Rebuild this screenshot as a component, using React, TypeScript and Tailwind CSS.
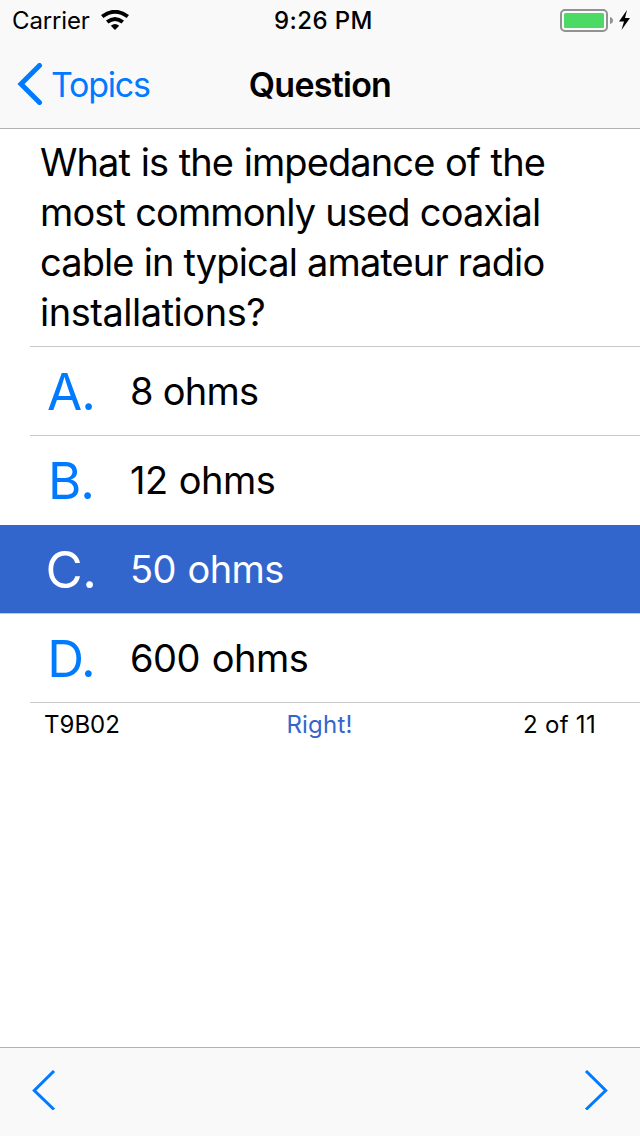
import React from 'react';

const lines = [
  { text: 'What is the impedance of the', style: 'tracking-[-0.9px] [word-spacing:0.8px]' },
  { text: 'most commonly used coaxial', style: 'tracking-[-0.88px] [word-spacing:0.3px]' },
  { text: 'cable in typical amateur radio', style: 'tracking-[-0.88px] [word-spacing:0.2px]' },
  { text: 'installations?', style: 'tracking-[-0.47px]' },
];

const answers = [
  { letter: 'A.', text: '8 ohms', style: 'tracking-[-0.75px]' },
  { letter: 'B.', text: '12 ohms', style: 'tracking-[-0.5px] [word-spacing:1px]' },
  { letter: 'C.', text: '50 ohms', style: 'tracking-[-0.6px] [word-spacing:1.5px]' },
  { letter: 'D.', text: '600 ohms', style: 'tracking-[-0.5px] [word-spacing:1.5px]' },
];

export default function App() {
  return (
    <div className="flex h-[1136px] w-[640px] flex-col overflow-hidden bg-white font-['Inter',sans-serif] text-black">
      <header className="h-[129px] shrink-0 border-b border-[#b2b2b2] bg-[#f9f9f9]">
        <div className="grid h-10 grid-cols-3 items-center pr-[8px] pl-3 text-[24px]">
          <div className="flex items-center gap-[11px]">
            <span className="pt-px tracking-[-0.15px]">Carrier</span>
            <svg className="h-5 w-7" viewBox="0 0 28 20">
              <path d="M1.200 6.500Q14-3 26.800 6.500M6.200 12Q14 5.800 21.800 12" fill="none" stroke="#000" strokeWidth="3.900" />
              <path d="M14 20l-4.200-4.300q4.200-3.500 8.400 0z" />
            </svg>
          </div>
          <span className="pt-px pl-[3px] text-center font-medium tracking-[0.4px]">9:26 PM</span>
          <div className="flex justify-end">
            <svg className="h-6 w-[72px]" viewBox="0 0 72 24">
              <rect x="1" y="2" width="46" height="21" rx="4" fill="none" stroke="#929292" strokeWidth="2" />
              <rect x="4" y="5" width="40" height="15" rx="1.500" fill="#4cd964" />
              <path d="M50 9q3 1 3 3.500T50 16z" fill="#929292" />
              <path d="M67 2l-8 11.500h5L61.500 22 70 10h-5z" />
            </svg>
          </div>
        </div>
        <div className="grid h-[88px] grid-cols-3 items-center text-[34px]">
          <button className="flex items-center gap-2 pl-[17px] text-[#007aff]">
            <svg className="h-[42px] w-[26px]" viewBox="0 0 26 42"><path d="M22.500 2.500L4 21l18.500 18.500" fill="none" stroke="currentColor" strokeWidth="5" strokeLinecap="round" /></svg>
            <span className="tracking-[-1.25px]">Topics</span>
          </button>
          <h1 className="text-center font-semibold tracking-[-0.75px]">Question</h1>
        </div>
      </header>
      <main className="flex-1">
        <p className="h-[217px] pt-2 pl-10 text-[38px] leading-[50px]">
          {lines.map((line) => (
            <span key={line.text} className={`block whitespace-nowrap ${line.style}`}>{line.text}</span>
          ))}
        </p>
        {answers.map((a, i) => (
          <div key={a.letter} className={i === 2 ? 'flex h-[89px] border-t border-white bg-[#3366cc] pl-[30px] text-white' : i === 3 ? 'flex h-[89px] border-t border-[#c8c7cc] pl-[30px]' : 'flex h-[89px] pl-[30px]'}>
            <div className={i >= 2 ? 'flex w-full items-center' : 'flex w-full items-center border-t border-[#c8c7cc]'}>
              <span className={i === 2 ? 'w-20 pt-0.5 pl-0.5 text-center text-[51px] tracking-[-0.5px]' : 'w-20 pt-0.5 pl-0.5 text-center text-[51px] tracking-[-1px] text-[#007aff]'}>{a.letter}</span>
              <span className={`ml-5 text-[38px] ${a.style}`}>{a.text}</span>
            </div>
          </div>
        ))}
        <div className="ml-[30px] grid grid-cols-3 border-t border-[#c8c7cc] pt-1 pr-[45px] pl-[14px] text-[24px]">
          <span>T9B02</span>
          <span className="text-center tracking-[0.2px] text-[#3366cc]">Right!</span>
          <span className="-mr-px text-right tracking-[0.3px]">2 of 11</span>
        </div>
      </main>
      <footer className="flex h-[89px] shrink-0 items-center justify-between border-t border-[#b2b2b2] bg-[#f9f9f9] px-8 pb-1 text-[#007aff]">
        <svg className="h-10 w-6" viewBox="0 0 24 40"><path d="M22 1L2.300 20.500 22 39.500" fill="none" stroke="currentColor" strokeWidth="3" /></svg>
        <svg className="h-10 w-6" viewBox="0 0 24 40"><path d="M2 1l19.700 19.500L2 39.500" fill="none" stroke="currentColor" strokeWidth="3" /></svg>
      </footer>
    </div>
  );
}
